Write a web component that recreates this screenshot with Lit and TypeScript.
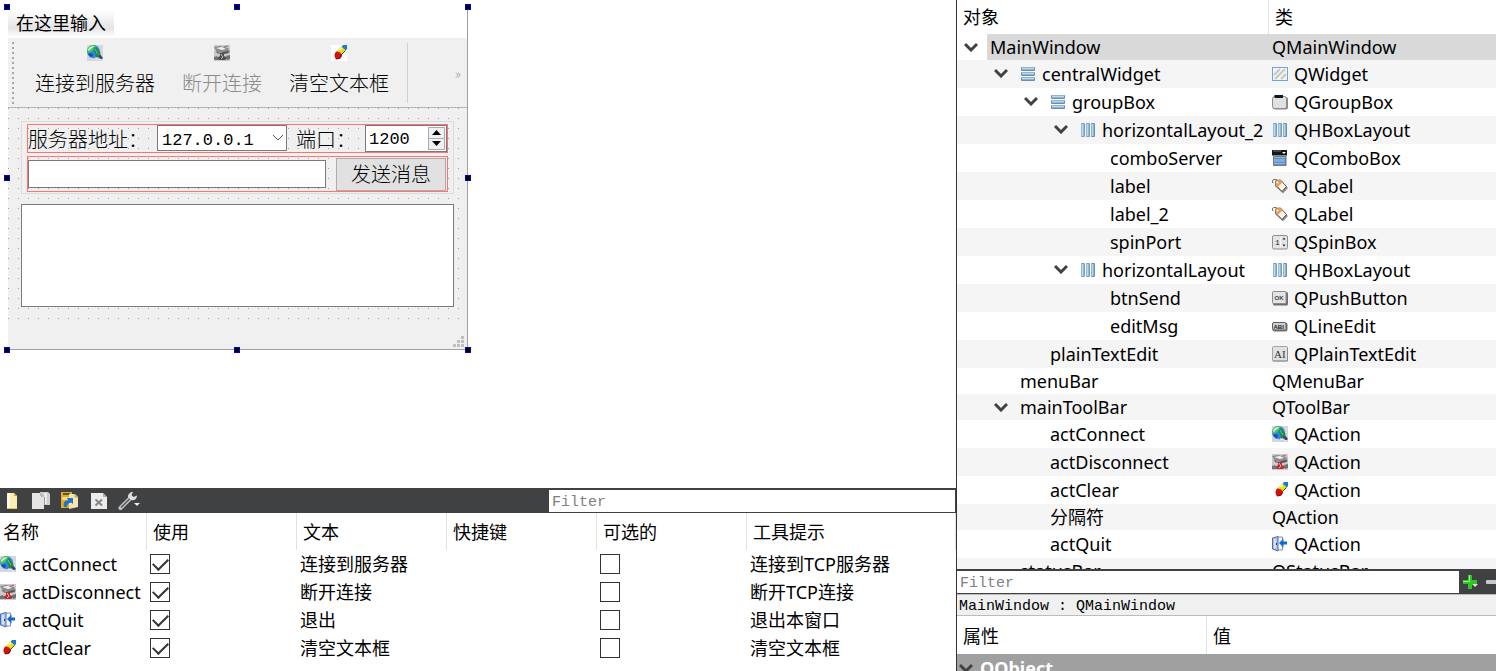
import { LitElement, html, svg, css, nothing, TemplateResult } from "lit";
import { customElement, property, state } from "lit/decorators.js";
import { classMap } from "lit/directives/class-map.js";

const shapes: Record<string, TemplateResult> = {
  globe: svg`
    <rect width="16" height="16" fill="#d6d6dc"/>
    <path d="M1 12 9 14 15 15.500V12L12 9z" fill="#a9b3c8"/>
    <path d="M10 11 14 14.500 16 13 13 9z" fill="#3b4a78"/>
    <circle cx="6.500" cy="6.500" r="6.500" fill="#2b86dc"/>
    <path d="M1 9C3 8 5 8 6 10 6 12 4 12 3 11.500z" fill="#1450b4"/>
    <path d="M0 5C1 1 5 -.5 9 .5 9 2 7 3 6 5S3 7 .5 8z" fill="#4cc460"/>
    <path d="M1 5C2 2 4 1 7 1 6 3 4 3 2 6z" fill="#d2f7d6"/>
    <path d="M8 2.500C11 2.500 10.500 6 13.500 7.500 13.500 10 11 12 9 12 9 9 6 7 8 2.500z" fill="#1e8a44"/>
    <path d="M8 4C9 5 9 7 11 9" stroke="#5fd07c" fill="none"/>
    <path d="M8 13 15 15" stroke="#f4f6ff"/>`,
  cut: svg`
    <rect width="16" height="16" fill="#cdc9cc"/>
    <path d="M0 2 6 1 14 3 16 7 10 8 3 7z" fill="#8c8c8c"/>
    <path d="M2 3 8 2 12 4 8 5z" fill="#f1f1f1"/>
    <path d="M1 6 6 8 14 6 15 8 10 9 4 8.500z" fill="#555"/>
    <path d="M6 8H10V11L14 13 11 15H5L3 13 6 11z" fill="#b5322e"/>
    <path d="M7 9 9 12 7 14" stroke="#f1b3ae" fill="none"/>
    <path d="M0 12 3 11 5 15H0zM12 11 16 10V14L13 15z" fill="#6c7277"/>
    <path d="M10 2 14 1" stroke="#c9635d"/>`,
  pill: svg`
    <path d="M12 0H16V4L14.500 5.500 10.500 2z" fill="#1879d8"/>
    <path d="M10.500 1.500 14.500 5.500 9.500 10.500 6 6z" fill="#e9df14"/>
    <path d="M8.500 5 11 3" stroke="#fffcc0" stroke-width="1.500"/>
    <path d="M14.500 5.500 9.500 10.500" stroke="#4b4608"/>
    <path d="M6 6 10 10 8 13 5 14.500 4 11 4 8z" fill="#cf1010"/>
    <circle cx="7" cy="10.500" r="3.500" fill="#d01212"/>
    <path d="M5 13.500C7 14.500 10 13 10.500 10" stroke="#7c0707" fill="none"/>`,
  door: svg`
    <path d="M5 1H10.500V14H5" fill="#f4f7fc" stroke="#7b8fc6"/>
    <path d="M.5 2 6 .5V15L.5 13z" fill="#a9c3ec" stroke="#5468ad"/>
    <path d="M3 3V12" stroke="#dcebff" stroke-width="1.500"/>
    <path d="M4.500 7V9" stroke="#283c7d"/>
    <path d="M7 7 11.500 2.500V5.500H15V8.500H11.500V11.500z" fill="#1467d3"/>`,
  vbox: svg`
    <rect x="1" y="1" width="14" height="4" rx="1" fill="#6f8ea8"/>
    <rect x="1" y="6" width="14" height="4" rx="1" fill="#6f8ea8"/>
    <rect x="1" y="11" width="14" height="4" rx="1" fill="#6f8ea8"/>
    <path d="M2 2.500H14M2 7.500H14M2 12.500H14" stroke="#b4daf5" stroke-width="2"/>`,
  hbox: svg`
    <rect x="1" y="1" width="4" height="14" rx="1" fill="#7d9cb8"/>
    <rect x="6" y="1" width="4" height="14" rx="1" fill="#7d9cb8"/>
    <rect x="11" y="1" width="4" height="14" rx="1" fill="#6f8ea8"/>
    <path d="M2.500 2V14M7.500 2V14M12.500 2V14" stroke="#b4daf5" stroke-width="2"/>`,
  widget: svg`
    <rect x=".5" y="1.500" width="15" height="13" fill="#f4f4f4" stroke="#76a1dc"/>
    <path d="M2 9 8 3M3 13 13 3M9 13 14 8" stroke="#c6c6c6" stroke-width="2"/>`,
  group: svg`
    <rect x="1" y="3" width="15" height="12.500" rx="2" fill="#8a8a8a"/>
    <rect x=".5" y="2.500" width="14" height="12" rx="2" fill="#e0e0e0" stroke="#8c8c8c"/>
    <rect x="2.500" y="1" width="8.500" height="3" fill="#161616"/>`,
  combo: svg`
    <rect x="0" y="0" width="15" height="5.500" fill="#171717"/>
    <path d="M1 1H9" stroke="#777"/>
    <path d="M10 2H14L12 4z" fill="#fff"/>
    <rect x="1" y="6" width="13.500" height="10" fill="#747d86"/>
    <rect x="2" y="7" width="11" height="8" fill="#6e8fb0"/>
    <rect x="2" y="9" width="11" height="3" fill="#75aee9"/>
    <path d="M2 7.500H13M2 13.500H13" stroke="#8fb4da"/>`,
  label: svg`
    <path d="M1 5C-1 1 3 1 5 2" stroke="#555" fill="none"/>
    <path d="M5 3 9 3 16 10 11 15.500 3 8z" fill="#8f8f8f"/>
    <path d="M4 2.500 8.500 2 14.500 8.500 10 13.500 3.500 7z" fill="#fbf4ea" stroke="#5b4a38"/>
    <path d="M4 2.500 8.500 2 10.500 4.500 5.500 9 3.500 7z" fill="#e2a15a"/>
    <circle cx="5.500" cy="4.500" r="1" fill="#fff"/>`,
  spin: svg`
    <rect x=".5" y="1.500" width="15" height="13.500" rx="1.500" fill="#e4e4e4" stroke="#8f8f8f"/>
    <text x="3" y="11" font-size="8" font-family="Liberation Mono" fill="#222">1</text>
    <path d="M10.500 5.500 12 3.500 13.500 5.500zM10.500 10.500H13.500L12 12.500z" fill="#222"/>
    <path d="M8.500 3V13" stroke="#f8f8f8"/>`,
  push: svg`
    <rect x="1" y="2" width="15" height="13.500" rx="1.500" fill="#6f6f6f"/>
    <rect x=".5" y="1.500" width="13.500" height="12" rx="1" fill="#e3e3e3" stroke="#8a8a8a"/>
    <text x="2.500" y="10" font-size="6" font-weight="700" font-family="Liberation Sans" fill="#444">OK</text>`,
  line: svg`
    <rect x=".5" y="4.500" width="15" height="9" rx="2" fill="#777"/>
    <rect x=".5" y="4.500" width="13.500" height="7.500" rx="1.500" fill="#d0d0d0" stroke="#5d5d5d"/>
    <text x="1.500" y="10.500" font-size="6" font-weight="700" font-family="Liberation Sans" fill="#222">ABI</text>`,
  plain: svg`
    <rect x=".5" y=".5" width="15" height="14.500" rx="1" fill="#e0e0e0" stroke="#a4a4a4"/>
    <path d="M1 15H15.500V2" stroke="#8d8d8d" fill="none"/>
    <text x="2" y="12" font-size="11" font-family="Liberation Serif" fill="#333">AI</text>`,
};

const barShapes: Record<string, TemplateResult> = {
  create: svg`
    <path d="M5 2H12L15 5V18H5z" fill="#fbeeb2"/>
    <path d="M5 2H8V18H5z" fill="#fffbe4"/>
    <path d="M12 2V5H15z" fill="#c9a84a"/>
    <path d="M5 17.500H15" stroke="#ddc169"/>`,
  copy: svg`
    <path d="M9 1H17L19 3V14H9z" fill="#cfcfcf"/>
    <path d="M14.500 2V13" stroke="#f4f4f4" stroke-width="2"/>
    <path d="M1 2H10L13 5V18H1z" fill="#e4e4e4"/>
    <path d="M10 2V5H13M13.500 6V14" fill="none" stroke="#999"/>`,
  paste: svg`
    <path d="M1 1H12V17H1z" fill="#e0ad27"/>
    <path d="M3 2H10V4H3z" fill="#5b5440"/>
    <path d="M2 6H11V9H2z" fill="#f6dc7d"/>
    <path d="M9 3H15L18 6V16L9 18z" fill="#f5e6b4"/>
    <path d="M15 3V6H18" fill="none" stroke="#b49543"/>
    <path d="M4 16C3 11 5 9 8 9.500L7 7H13V13L11 11.500C8 12 7 14 7 16z" fill="#2671cf"/>`,
  remove: svg`
    <path d="M2 2H14L18 6V18H2z" fill="#ececec"/>
    <path d="M14 2V6H18z" fill="#aaa"/>
    <path d="M6.500 8.500 13 14.500M13 8.500 6.500 14.500" stroke="#858585" stroke-width="2"/>`,
  wrench: svg`
    <path d="M2.500 17 12 7.500" stroke="#c4c4c4" stroke-width="4" stroke-linecap="round"/>
    <path d="M3 16.500 12 7.500" stroke="#555" stroke-width="1.500"/>
    <path d="M10 6C10 3 12 1 15 1L13.500 4 15.500 6 19 4.500C19 8 16 10 13 9z" fill="#dedede"/>
    <path d="M16 12H22L19 15z" fill="#eee"/>`,
  plus: svg`
    <path d="M8 3V17M1 10H15" stroke="#2fc624" stroke-width="4"/>
    <path d="M7.500 3V9.500H1" stroke="#9bf08c" fill="none"/>
    <path d="M10 12H16L13 15z" fill="#ddd"/>`,
  minus: svg`<rect x="0" y="8" width="14" height="4" rx="1" fill="#c9c9c9"/>`,
};

const glyph = (name: string, cls = "") =>
  html`<svg class="glyph ${cls}" viewBox="0 0 16 16" width="16" height="16" fill="none" aria-hidden="true">${shapes[name]}</svg>`;
const barGlyph = (name: string, width = 20) =>
  html`<svg viewBox="0 0 ${width} 20" width=${width} height="20" fill="none" aria-hidden="true">${barShapes[name]}</svg>`;
const chevron = html`<svg class="chevron" viewBox="0 0 14 10" width="14" height="10" aria-hidden="true">
  <path d="M1 2 7 8 13 2" fill="none" stroke="#404142" stroke-width="3"/></svg>`;

const shared = css`
  * { box-sizing: border-box; }
  button, input, select, textarea { font: inherit; color: inherit; margin: 0; border-radius: 0; outline: none; }
  button { padding: 0; border: 0; background: none; }
  svg { display: block; flex: none; }
  table { border-collapse: separate; border-spacing: 0; table-layout: fixed; width: 100%; }
  th { font-weight: 400; text-align: left; }
  th, td { padding: 0; white-space: nowrap; overflow: hidden; }
  .filter {
    font-family: "Liberation Mono", monospace; font-size: 15px; background: #fff;
    border: 0; padding: 3px 3px 0; min-width: 0;
  }
  .filter::placeholder { color: #808080; opacity: 1; }
`;

@customElement("form-designer")
export class FormDesigner extends LitElement {
  static styles = [shared, css`
    :host { display: block; padding: 7px; font-family: "Noto Sans CJK SC", sans-serif; font-size: 20px; font-weight: 300; }
    .form { position: relative; width: 461px; border: 1px solid #a0a0a0; border-top-color: #fff; border-left-color: #fff; background: #f0f0f0; }
    .handle { position: absolute; width: 6px; height: 6px; background: #000; border: 1px solid #0000e0; }
    .top { top: -4px; } .middle { top: calc(50% - 4px); } .bottom { bottom: -4px; }
    .left { left: -4px; } .center { left: calc(50% - 4px); } .right { right: -4px; }
    .menubar { height: 31px; background: #fff; border-bottom: 1px solid #efefef; display: flex; padding: 2px 0; }
    .menubar button {
      font-weight: 400; font-size: 18px; line-height: 24px; padding: 0 8px 2px;
      background: linear-gradient(#fff 0%, #e4e4e4 70%, #fcfcfc 100%);
    }
    .toolbar { display: flex; align-items: center; height: 69px; border-bottom: 1px solid #b4b4b4; padding: 0 6px 0 4px; gap: 18px; }
    .grip { width: 2px; height: 62px; margin-right: 3px; background: repeating-linear-gradient(#a8a8a8 0 2px, #f0f0f0 2px 5px); }
    .actions { display: flex; gap: 27px; padding-bottom: 2px; }
    .actions button { display: flex; flex-direction: column; align-items: center; gap: 6px; line-height: 32px; }
    .actions button:disabled { color: #8a8a8a; }
    .gray { filter: grayscale(1); }
    .onwhite { background: #fff; }
    .line { width: 1px; height: 60px; background: #cfcfcf; }
    .more { font-size: 14px; color: #a0a0a0; margin-left: auto; }
    .central {
      display: flex; flex-direction: column; gap: 10px; padding: 13px 13px 20px;
      background: conic-gradient(from 270deg at 1px 1px, #a0a0a0 90deg, transparent 0) 0 0 / 10px 10px;
    }
    .group { border: 1px solid #dcdcdc; padding: 2px 5px 1px; display: flex; flex-direction: column; gap: 3px; }
    .row { display: flex; align-items: center; border: 1px solid #ff7373; }
    .row.first { height: 29px; align-items: flex-start; }
    .row.second { height: 36px; gap: 10px; padding: 0 1px 0 0; }
    .row label { flex: none; line-height: 28px; }
    .address { width: 129px; }
    .port { width: 69px; margin-left: 9px; }
    .combo { position: relative; width: 130px; height: 26px; }
    .row input, .row select { font-family: "Liberation Mono", monospace; font-size: 17px; }
    .combo select { display: block; appearance: none; width: 100%; height: 100%; border: 1px solid #7a7a7a; background: #fff; padding: 2px 4px 0; }
    .combo svg { position: absolute; right: 3px; top: 9px; }
    .spin { flex: 1; display: flex; height: 27px; border: 1px solid #7a7a7a; background: #fff; padding: 1px; }
    .spin input { flex: 1; width: 0; border: 0; padding: 3px 2px 0; appearance: textfield; background: none; }
    .spin input::-webkit-inner-spin-button { appearance: none; }
    .steps { display: grid; grid-template-rows: 1fr 1fr; width: 17px; }
    .steps button { display: grid; place-items: center; border: 1px solid #acacac; background: #f0f0f0; }
    .steps button + button { border-top: 0; }
    .row .edit { flex: 1; min-width: 0; height: 28px; border: 1px solid #7a7a7a; background: #fff; }
    .send { width: 110px; height: 33px; background: #e1e1e1; border: 1px solid #adadad; line-height: 30px; }
    .plain { display: block; width: 100%; height: 103px; resize: none; border: 1px solid #7a7a7a; background: #fff; }
    .status { display: flex; justify-content: flex-end; align-items: flex-end; height: 22px; padding: 0 3px 2px; }
  `];

  render() {
    const marks = ["top left", "top center", "top right", "middle left", "middle right", "bottom left", "bottom center", "bottom right"];
    return html`<div class="form">
      <div class="menubar"><button>在这里输入</button></div>
      <div class="toolbar">
        <span class="grip"></span>
        <div class="actions">
          <button>${glyph("globe")}连接到服务器</button>
          <button disabled>${glyph("cut", "gray")}断开连接</button>
          <button>${glyph("pill", "onwhite")}清空文本框</button>
        </div>
        <span class="line"></span>
        <span class="more">»</span>
      </div>
      <div class="central">
        <div class="group">
          <div class="row first">
            <label class="address" for="server">服务器地址：</label>
            <span class="combo">
              <select id="server"><option>127.0.0.1</option></select>
              <svg viewBox="0 0 12 8" width="12" height="8" aria-hidden="true"><path d="M1 1 6 6 11 1" fill="none" stroke="#555"/></svg>
            </span>
            <label class="port" for="port">端口：</label>
            <span class="spin">
              <input id="port" type="number" value="1200">
              <span class="steps">
                <button aria-label="增加"><svg viewBox="0 0 9 5" width="9" height="5"><path d="M4.500 0 9 5H0z"/></svg></button>
                <button aria-label="减少"><svg viewBox="0 0 9 5" width="9" height="5"><path d="M0 0H9L4.500 5z"/></svg></button>
              </span>
            </span>
          </div>
          <div class="row second">
            <input class="edit" aria-label="消息">
            <button class="send">发送消息</button>
          </div>
        </div>
        <textarea class="plain" aria-label="消息记录"></textarea>
      </div>
      <div class="status">
        <svg viewBox="0 0 11 11" width="11" height="11" aria-hidden="true">
          <path d="M8 0h3v3H8zM4 4h3v3H4zM8 4h3v3H8zM0 8h3v3H0zM4 8h3v3H4zM8 8h3v3H8z" fill="#bfbfbf"/></svg>
      </div>
      ${marks.map((m) => html`<span class="handle ${m}"></span>`)}
    </div>`;
  }
}

interface ActionRow { icon: string; name: string; used: boolean; text: string; tip: string; }

@customElement("action-editor")
export class ActionEditor extends LitElement {
  @state() rows: ActionRow[] = [
    { icon: "globe", name: "actConnect", used: true, text: "连接到服务器", tip: "连接到TCP服务器" },
    { icon: "cut", name: "actDisconnect", used: true, text: "断开连接", tip: "断开TCP连接" },
    { icon: "door", name: "actQuit", used: true, text: "退出", tip: "退出本窗口" },
    { icon: "pill", name: "actClear", used: true, text: "清空文本框", tip: "清空文本框" },
  ];

  static styles = [shared, css`
    :host { display: block; padding-bottom: 9px; }
    .bar { display: flex; height: 25px; background: #404142; padding: 2px 1px 1px 2px; }
    .tools { display: flex; align-items: center; gap: 9px; flex: 1; }
    .bar .filter { width: 406px; }
    col.data { width: 150px; }
    col.key { width: 147px; }
    th { height: 37px; padding-left: 6px; border-right: 1px solid #e2e2e2; }
    th:first-child { padding-left: 3px; }
    td { height: 28px; padding-left: 3px; }
    td:first-child { padding-left: 0; }
    .name { display: flex; align-items: center; gap: 6px; }
    .check { appearance: none; display: grid; place-items: center; width: 20px; height: 20px; border: 1px solid #333; background: #fff; }
    .check:checked::before { content: ""; width: 13px; height: 7px; border: solid #333; border-width: 0 0 2px 2px; transform: translateY(-2px) rotate(-45deg); }
  `];

  render() {
    return html`
      <div class="bar">
        <div class="tools">
          <button aria-label="新建">${barGlyph("create")}</button>
          <button aria-label="复制">${barGlyph("copy")}</button>
          <button aria-label="粘贴">${barGlyph("paste")}</button>
          <button aria-label="删除">${barGlyph("remove")}</button>
          <button aria-label="配置">${barGlyph("wrench", 22)}</button>
        </div>
        <input class="filter" placeholder="Filter" aria-label="Filter">
      </div>
      <table>
        <colgroup><col class="key"><col class="data"><col class="data"><col class="data"><col class="data"><col></colgroup>
        <thead><tr><th>名称</th><th>使用</th><th>文本</th><th>快捷键</th><th>可选的</th><th>工具提示</th></tr></thead>
        <tbody>${this.rows.map((r) => html`<tr>
          <td><span class="name">${glyph(r.icon)}${r.name}</span></td>
          <td><input class="check" type="checkbox" .checked=${r.used} aria-label="使用 ${r.name}"></td>
          <td>${r.text}</td>
          <td></td>
          <td><input class="check" type="checkbox" aria-label="可选的 ${r.name}"></td>
          <td>${r.tip}</td>
        </tr>`)}</tbody>
      </table>`;
  }
}

interface Node { depth: number; name: string; type: string; open?: boolean; nameIcon?: string; typeIcon?: string; }

const nodes: Node[] = [
  { depth: 0, name: "MainWindow", type: "QMainWindow", open: true },
  { depth: 1, name: "centralWidget", type: "QWidget", open: true, nameIcon: "vbox", typeIcon: "widget" },
  { depth: 2, name: "groupBox", type: "QGroupBox", open: true, nameIcon: "vbox", typeIcon: "group" },
  { depth: 3, name: "horizontalLayout_2", type: "QHBoxLayout", open: true, nameIcon: "hbox", typeIcon: "hbox" },
  { depth: 4, name: "comboServer", type: "QComboBox", typeIcon: "combo" },
  { depth: 4, name: "label", type: "QLabel", typeIcon: "label" },
  { depth: 4, name: "label_2", type: "QLabel", typeIcon: "label" },
  { depth: 4, name: "spinPort", type: "QSpinBox", typeIcon: "spin" },
  { depth: 3, name: "horizontalLayout", type: "QHBoxLayout", open: true, nameIcon: "hbox", typeIcon: "hbox" },
  { depth: 4, name: "btnSend", type: "QPushButton", typeIcon: "push" },
  { depth: 4, name: "editMsg", type: "QLineEdit", typeIcon: "line" },
  { depth: 2, name: "plainTextEdit", type: "QPlainTextEdit", typeIcon: "plain" },
  { depth: 1, name: "menuBar", type: "QMenuBar" },
  { depth: 1, name: "mainToolBar", type: "QToolBar", open: true },
  { depth: 2, name: "actConnect", type: "QAction", typeIcon: "globe" },
  { depth: 2, name: "actDisconnect", type: "QAction", typeIcon: "cut" },
  { depth: 2, name: "actClear", type: "QAction", typeIcon: "pill" },
  { depth: 2, name: "分隔符", type: "QAction" },
  { depth: 2, name: "actQuit", type: "QAction", typeIcon: "door" },
  { depth: 1, name: "statusBar", type: "QStatusBar" },
];

@customElement("object-inspector")
export class ObjectInspector extends LitElement {
  @property({ attribute: false }) nodes: Node[] = nodes;
  @state() selected = 0;

  static styles = [shared, css`
    :host { display: block; overflow: hidden; min-height: 0; background: #fff; }
    col.object { width: 312px; }
    th { height: 34px; padding-left: 6px; }
    th:first-child { border-right: 1px solid #e2e2e2; }
    td { height: 26px; }
    .tall td { height: 28px; }
    tbody tr:nth-child(even) { background: #f5f5f5; }
    .object-cell { display: flex; align-items: stretch; height: 100%; }
    .branch { display: flex; align-items: center; justify-content: flex-end; padding-right: 9px; flex: none; height: 26px; }
    .caption { display: flex; align-items: center; gap: 6px; flex: 1; padding-left: 3px; }
    .type { padding-left: 3px; }
    .type .caption { padding: 0; }
    .selected .caption, .selected .type { background: #d9d9d9; }
  `];

  render() {
    return html`<table>
      <colgroup><col class="object"><col></colgroup>
      <thead><tr><th>对象</th><th>类</th></tr></thead>
      <tbody>${this.nodes.map((n, i) => html`
        <tr class=${classMap({ tall: !!n.typeIcon, selected: i === this.selected })} @click=${() => (this.selected = i)}>
          <td><div class="object-cell">
            <span class="branch" style="width:${(n.depth + 1) * 30}px">${n.open ? chevron : nothing}</span>
            <span class="caption">${n.nameIcon ? glyph(n.nameIcon) : nothing}${n.name}</span>
          </div></td>
          <td class="type"><span class="caption">${n.typeIcon ? glyph(n.typeIcon) : nothing}${n.type}</span></td>
        </tr>`)}</tbody>
    </table>`;
  }
}

@customElement("property-editor")
export class PropertyEditor extends LitElement {
  static styles = [shared, css`
    :host { display: block; flex: none; background: #fff; }
    .bar { display: flex; align-items: center; height: 25px; padding: 2px 0 1px; background: #404142; overflow: hidden; }
    .bar .filter { flex: 1; align-self: stretch; }
    .bar button { height: 20px; }
    .add { margin-left: 3px; }
    .remove { width: 10px; margin-left: 4px; overflow: hidden; }
    .path { height: 22px; padding: 1px 2px 0; background: #f0f0f0; border-top: 1px solid #bcbcbc; border-bottom: 1px solid #bcbcbc; font: 15px/22px "Liberation Mono", monospace; }
    .sheet { height: 55px; overflow: hidden; }
    col.key { width: 250px; }
    th { height: 38px; padding: 2px 0 0 6px; }
    th:first-child { border-right: 1px solid #e2e2e2; }
    td { height: 28px; background: #a0a0a0; color: #fff; font-weight: 700; }
    .section { display: flex; align-items: center; gap: 7px; padding-left: 2px; }
  `];

  render() {
    return html`
      <div class="bar">
        <input class="filter" placeholder="Filter" aria-label="Filter">
        <button class="add" aria-label="添加">${barGlyph("plus")}</button>
        <button class="remove" aria-label="移除">${barGlyph("minus")}</button>
      </div>
      <div class="path">MainWindow : QMainWindow</div>
      <div class="sheet"><table>
        <colgroup><col class="key"><col></colgroup>
        <thead><tr><th>属性</th><th>值</th></tr></thead>
        <tbody><tr><td colspan="2"><span class="section">${chevron}QObject</span></td></tr></tbody>
      </table></div>`;
  }
}

@customElement("app-root")
export class AppRoot extends LitElement {
  static styles = css`
    :host {
      display: grid; grid-template-columns: minmax(0, 1fr) 540px; height: 100vh; overflow: hidden;
      background: #fff; color: #000; font-family: "Noto Sans", "Noto Sans CJK SC", sans-serif; font-size: 18px; line-height: 26px;
    }
    .work { display: flex; flex-direction: column; min-height: 0; }
    .canvas { flex: 1; min-height: 0; }
    .side { display: flex; flex-direction: column; min-height: 0; border-left: 1px solid #333; }
    .tree { flex: 1; }
  `;

  render() {
    return html`
      <main class="work">
        <form-designer class="canvas"></form-designer>
        <action-editor></action-editor>
      </main>
      <aside class="side">
        <object-inspector class="tree"></object-inspector>
        <property-editor></property-editor>
      </aside>`;
  }
}
